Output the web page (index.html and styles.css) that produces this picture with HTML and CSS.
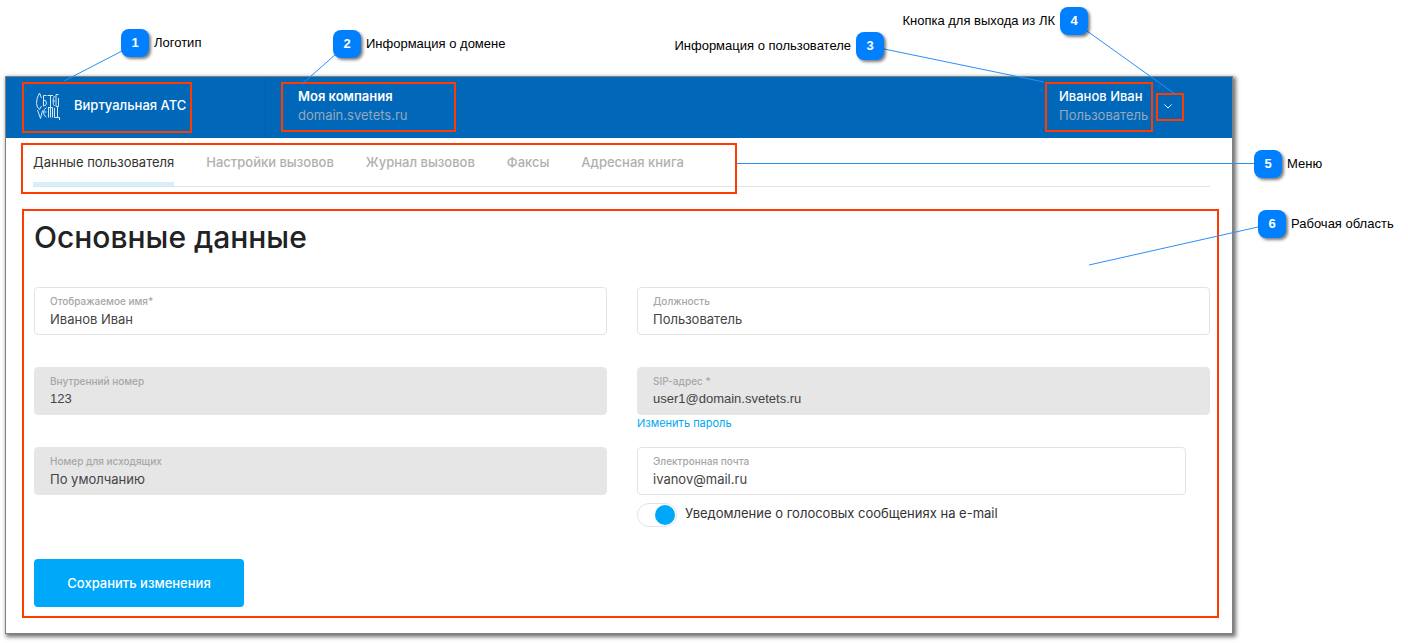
FILE: index.html
```html
<!DOCTYPE html>
<html lang="ru">
<head>
<meta charset="utf-8">
<title>Виртуальная АТС</title>
<link rel="stylesheet" href="styles.css">
</head>
<body>
<div class="sheet">
  <div class="window">
    <header class="topbar">
      <div class="brand-cell">
        <a class="brand frame" href="#">
          <svg class="logo" viewBox="0 0 24 28" aria-hidden="true">
            <path d="M5.500 6L3.500 1Q.3 6 .5 11.500Q.8 15.500 3.500 17.500L5.500 14M1.500 18L4.500 26.500 6.500 18.500"/>
            <path d="M10.500 3.500H7.500V14M7.500 8Q10.500 8 10.500 11T7.500 14M10.500 15.500Q7.500 17 7.500 20.500T10.500 25M7.500 20H10.500"/>
            <path d="M11.500 3.500H17M14.500 3.500V25.500M12.500 15V25.500M12.500 15.500H16.500V25.500M18.500 4Q17 6 17 9.500T18.500 14M17 9H19"/>
            <path d="M22.500 2.500H20V14.500H22.500V6M18.500 16V25.500H23.500V28M21.500 14.500V25.500"/>
          </svg>
          <span>Виртуальная АТС</span>
        </a>
      </div>
      <div class="company frame">
        <strong>Моя компания</strong>
        <span class="muted">domain.svetets.ru</span>
      </div>
      <div class="account">
        <div class="user frame">
          <strong>Иванов Иван</strong>
          <span class="muted">Пользователь</span>
        </div>
        <button class="exit frame" type="button" aria-label="Выход">
          <svg viewBox="0 0 8 5" aria-hidden="true"><path d="M.5.500L4 4 7.500.500"/></svg>
        </button>
      </div>
    </header>

    <nav class="tabs">
      <a class="active" href="#">Данные пользователя</a>
      <a href="#">Настройки вызовов</a>
      <a href="#">Журнал вызовов</a>
      <a href="#">Факсы</a>
      <a href="#">Адресная книга</a>
    </nav>

    <main class="workspace frame">
      <h1>Основные данные</h1>
      <form>
        <div class="fields">
          <div class="cell">
            <label class="field"><span>Отображаемое имя*</span><input type="text" value="Иванов Иван"></label>
          </div>
          <div class="cell">
            <label class="field"><span>Должность</span><input type="text" value="Пользователь"></label>
          </div>
          <div class="cell">
            <label class="field locked"><span>Внутренний номер</span><input class="plain" type="text" value="123" readonly></label>
          </div>
          <div class="cell">
            <label class="field locked"><span>SIP-адрес *</span><input class="plain" type="text" value="user1@domain.svetets.ru" readonly></label>
            <a class="change" href="#">Изменить пароль</a>
          </div>
          <div class="cell">
            <label class="field locked"><span>Номер для исходящих</span><input type="text" value="По умолчанию" readonly></label>
          </div>
          <div class="cell email">
            <label class="field"><span>Электронная почта</span><input type="email" value="ivanov@mail.ru"></label>
            <label class="toggle"><input type="checkbox" checked><span>Уведомление о голосовых сообщениях на e-mail</span></label>
          </div>
        </div>
        <button class="save" type="submit">Сохранить изменения</button>
      </form>
    </main>
  </div>

  <svg class="lines lines-left" width="400" height="300" aria-hidden="true">
    <path d="M122 51L64 81M336 54L302 84"/>
  </svg>
  <svg class="lines lines-right" width="552" height="300" aria-hidden="true">
    <path d="M28 49L188 82M231 31L319 94M402 227L233 265"/>
  </svg>
  <div class="link-line"></div>

  <div class="callout c1"><b>1</b><span>Логотип</span></div>
  <div class="callout c2"><b>2</b><span>Информация о домене</span></div>
  <div class="callout c3"><span>Информация о пользователе</span><b>3</b></div>
  <div class="callout c4"><span>Кнопка для выхода из ЛК</span><b>4</b></div>
  <div class="callout c5"><b>5</b><span>Меню</span></div>
  <div class="callout c6"><b>6</b><span>Рабочая область</span></div>
</div>
</body>
</html>
```
FILE: styles.css
```css
*, *::before, *::after { box-sizing: border-box; }
body { margin: 0; background: #fff; color: #333; font: 13px/20px Inter, sans-serif; }
a { color: inherit; text-decoration: none; }
.sheet { position: relative; padding: 76px 175px 9px 5px; }
.window { background: #fff; border: 1px solid #808080; box-shadow: 2px 2px 4px 1px rgba(0, 0, 0, .55); padding-bottom: 15px; }
.frame { border: 2px solid #ff3c00; }

/* top bar */
.topbar { display: flex; align-items: center; height: 61px; background: #0067b9; color: #fff; line-height: 19px; }
.brand-cell { display: flex; align-items: center; align-self: stretch; width: 260px; padding-left: 16px; border-right: 1px solid #0060ac; }
.brand { display: flex; align-items: center; gap: 14px; width: 170px; height: 51px; padding: 0 0 4px 12px; font-weight: 500; white-space: nowrap; }
.logo { width: 24px; height: 28px; fill: none; stroke: #d8e8f6; stroke-width: 1; }
.company, .user { display: flex; flex-direction: column; justify-content: center; height: 50px; padding-bottom: 2px; white-space: nowrap; }
.company { width: 175px; margin: 0 0 2px 15px; padding-left: 15px; }
.topbar strong { font-weight: 500; }
.company strong { font-weight: 600; }
.muted { color: #94a9bd; }
.account { display: flex; align-items: center; gap: 3px; margin-left: auto; padding: 0 48px 2px 0; }
.user { width: 108px; padding-left: 12px; }
.exit { display: grid; place-items: center; width: 28px; height: 28px; padding: 0 4px 0 0; background: none; }
.exit svg { width: 8px; height: 5px; fill: none; stroke: #fff; }

/* tabs */
.tabs { position: relative; display: flex; gap: 32px; margin: 0 22px 22px 27px; padding-top: 14px; border-bottom: 1px solid #e3e3e3; color: #b0b0b0; font-weight: 500; white-space: nowrap; }
.tabs a { padding-bottom: 10px; border-bottom: 4px solid transparent; }
.tabs .active { color: #333; font-weight: 400; border-color: #d6effd; }
.tabs::after { content: ""; position: absolute; top: 5px; bottom: -8px; left: -12px; width: 716px; border: 2px solid #ff3c00; pointer-events: none; }

/* form */
.workspace { margin: 0 13px 0 16px; padding: 8px 7px 9px 10px; }
h1 { margin: 0 0 32px; color: #222; font-size: 30px; line-height: 36px; font-weight: 500; }
.fields { display: grid; grid-template-columns: 1fr 1fr; column-gap: 30px; }
.cell { min-height: 80px; }
.field { display: block; height: 48px; padding: 5px 15px; border: 1px solid #e3e3e3; border-radius: 4px; }
.field span { display: block; color: #a6a6a6; font-size: 10px; line-height: 16px; font-weight: 500; }
.field input { display: block; width: 100%; height: 20px; padding: 0; border: 0; outline: 0; background: none; color: #444; font: inherit; }
.locked { background: #e6e6e6; border-color: #e6e6e6; }
.field .plain { font-family: "Liberation Sans", Arial, sans-serif; }
.change { display: block; width: max-content; color: #00a8f0; font-size: 11px; line-height: 16px; }
.email { padding-right: 24px; }
.toggle { display: flex; gap: 8px; margin-top: 8px; white-space: nowrap; }
.toggle input { appearance: none; display: flex; justify-content: flex-end; flex: none; width: 40px; height: 24px; margin: 0; padding: 1px; border: 1px solid #e3e3e3; border-radius: 12px; }
.toggle input::before { content: ""; width: 20px; height: 20px; border-radius: 50%; background: #00a8f9; }
.save { display: block; width: 210px; height: 48px; margin-top: 32px; border: 0; border-radius: 4px; background: #00a8f9; color: #fff; font: 500 13px/20px Inter, sans-serif; }

/* callouts */
.lines { position: absolute; top: 0; fill: none; stroke: #2a90f8; pointer-events: none; }
.lines-left { left: 0; }
.lines-right { right: 0; }
.link-line { position: absolute; top: 163px; left: 737px; right: 154px; height: 1px; background: #2a90f8; }
.callout { position: absolute; display: flex; align-items: center; gap: 5px; color: #000; font: 13px/20px "Liberation Sans", Arial, sans-serif; white-space: nowrap; }
.callout b { width: 28px; height: 28px; border-radius: 8px; background: #0080ff; box-shadow: 2px 2px 3px rgba(0, 0, 0, .5); color: #fff; line-height: 28px; text-align: center; }
.c1 { top: 29px; left: 121px; }
.c2 { top: 30px; left: 333px; }
.c3 { top: 32px; right: 524px; }
.c4 { top: 7px; right: 320px; }
.c5 { top: 150px; left: calc(100% - 154px); }
.c6 { top: 210px; left: calc(100% - 150px); }
```
